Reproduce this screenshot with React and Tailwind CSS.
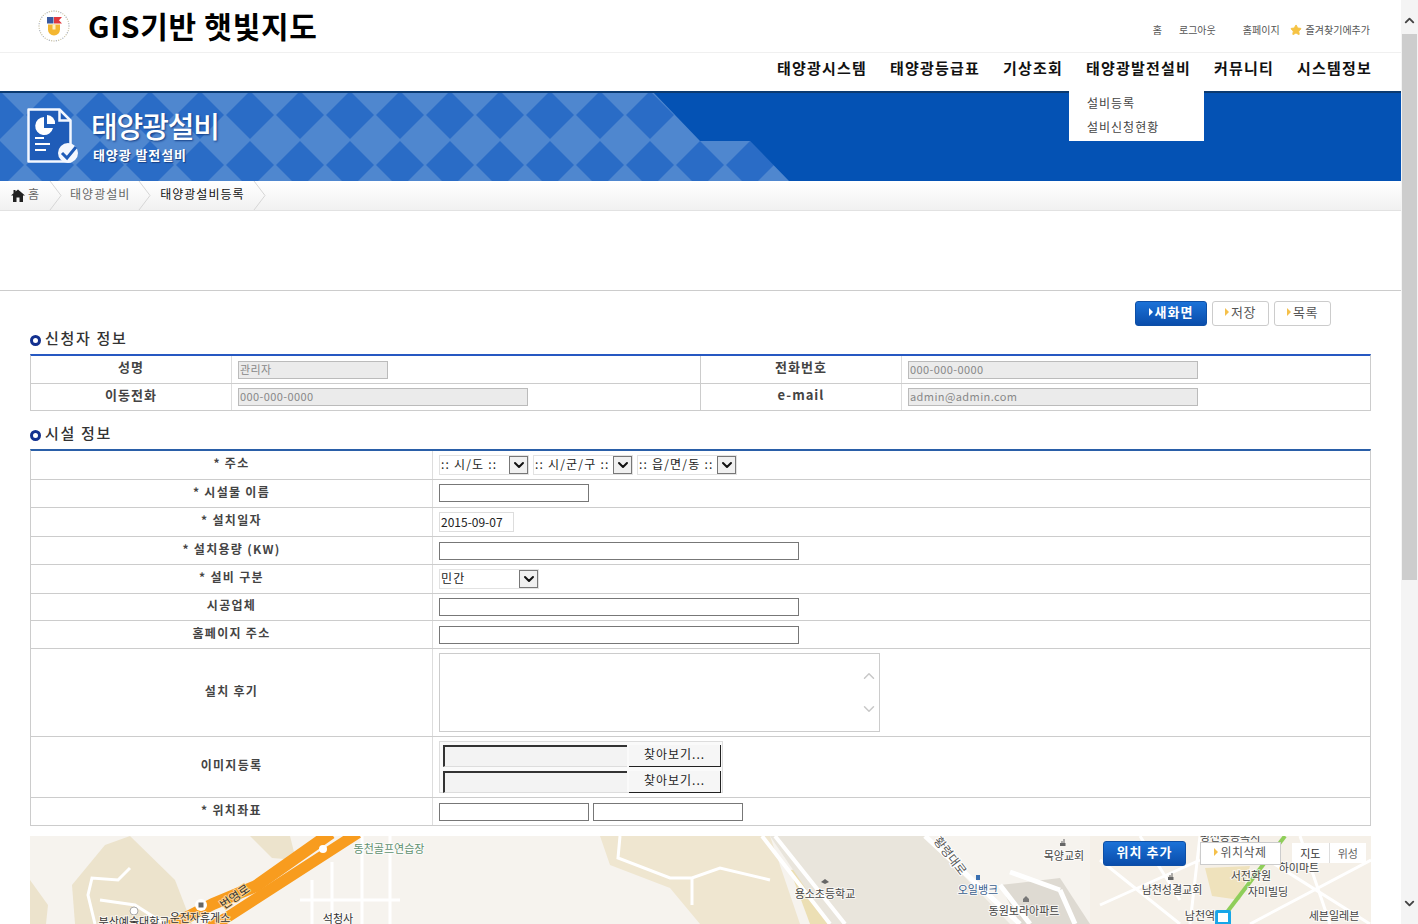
import React from "react";
import { ChevronDown, ChevronUp, Star } from "lucide-react";

function Logo() {
  const dots = [];
  for (let i = 0; i < 40; i++) {
    const a = (i / 40) * Math.PI * 2;
    dots.push(<circle key={i} cx={17 + 15 * Math.cos(a)} cy={17 + 15 * Math.sin(a)} r="0.7" fill={i % 3 ? "#c9c2a6" : "#aab0b8"} />);
  }
  return (
    <svg width="34" height="34" viewBox="0 0 34 34" className="ml-[37px] mt-[9px] shrink-0">
      {dots}
      <rect x="10" y="8" width="6.500" height="6.500" fill="#3a5aa0" />
      <path d="M17 8h8l-3 3.300 3 3.200h-8z" fill="#e0393e" />
      <path d="M11 15.500h12v5a6 6 0 0 1-12 0z" fill="#f4b731" />
      <path d="M15.500 15.500h3v5h-3z" fill="#fff0c0" />
    </svg>
  );
}

function DocIcon() {
  return (
    <svg width="56" height="60" viewBox="0 0 56 60" className="absolute left-[26px] top-[14px]">
      <path d="M2.500 2.500h31l11 11v41h-42z" fill="#1f5cb8" stroke="#f4f8ff" strokeWidth="2.500" strokeLinejoin="round" />
      <path d="M33.500 2.500v11h11" fill="none" stroke="#f4f8ff" strokeWidth="2.500" />
      <path d="M18 10a9 9 0 1 0 9 11h-9z" fill="#fff" />
      <path d="M21 8a8 8 0 0 1 8 9h-8z" fill="#fff" />
      <path d="M9 31h9M9 37h15M9 43h11" stroke="#fff" strokeWidth="2" />
      <circle cx="42" cy="46" r="10" fill="#f4f8ff" />
      <path d="M36 46l5 5 9-11" fill="none" stroke="#1f5cb8" strokeWidth="3" />
    </svg>
  );
}

function Banner() {
  return (
    <div className="relative h-[90px] bg-[#0452b4] border-t-2 border-[#0b3a70]">
      <svg width="800" height="88" viewBox="0 93 800 88" className="absolute left-0 top-0">
        <defs>
          <pattern id="diamonds" x="-25" y="90" width="50" height="50" patternUnits="userSpaceOnUse">
            <rect width="50" height="50" fill="#4f87cf" />
            <path d="M25 1L49 25 25 49 1 25z" fill="#2a6cc6" />
          </pattern>
        </defs>
        <path d="M0 91H652L700 141H750L789 181H0z" fill="url(#diamonds)" />
      </svg>
      <DocIcon />
      <div className="absolute left-[91px] top-[13px] text-[29px] leading-[38px] text-white tracking-[-1.100px] font-medium [text-shadow:1px_1px_2px_#163f85]">태양광설비</div>
      <div className="absolute left-[93px] top-[53px] text-[13px] leading-[18px] font-bold text-white tracking-[0.9px] [text-shadow:1px_1px_1px_#163f85]">태양광 발전설비</div>
      <div className="absolute left-[1069px] top-[-2px] w-[135px] h-[50px] bg-white pl-[18px] text-[12px] leading-[24px] text-[#444] tracking-[1px]">
        <div className="h-[24px]">설비등록</div>
        <div className="h-[24px]">설비신청현황</div>
      </div>
    </div>
  );
}

function Crumb() {
  return (
    <svg width="14" height="29" viewBox="0 0 14 29" className="shrink-0">
      <path d="M1 0l11 14.500L1 29" fill="none" stroke="#d6d6d6" strokeWidth="1" />
    </svg>
  );
}

function HomeGlyph() {
  return (
    <svg width="14" height="13" viewBox="0 0 14 13" className="mr-[3px] shrink-0">
      <path d="M7 0.500L14 6.500H12V13H8.500V8.500H5.500V13H2V6.500H0L2.500 4.300V1H4.500V2.600z" fill="#222" />
    </svg>
  );
}

function Tri({ color }) {
  return <span className={`inline-block w-0 h-0 mr-[2px] border-y-[4px] border-y-transparent border-l-[4px] ${color}`} />;
}

function BlueBtn({ children, className }) {
  return (
    <div className={`flex items-center justify-center pb-[3px] rounded-[3px] border border-[#0d4fa6] bg-linear-to-b from-[#1b72d8] to-[#0a4dab] text-white font-bold text-[13px] tracking-[1px] ${className}`}>
      {children}
    </div>
  );
}

function GhostBtn({ children, className }) {
  return (
    <div className={`flex items-center justify-center pb-[3px] rounded-[3px] border border-[#ccc] bg-white text-[#555] text-[13px] tracking-[0.5px] ${className}`}>
      <Tri color="border-l-[#f5c04a]" />
      {children}
    </div>
  );
}

function Title({ children, className, textClass, dotClass = "mt-[3px]" }) {
  return (
    <div className={`flex items-center text-[15px] font-medium text-[#333] tracking-[1.700px] ${className}`}>
      <span className={`w-[11px] h-[11px] rounded-full border-[3px] border-[#12308f] bg-white mr-[4px] ${dotClass}`} />
      <span className={textClass}>{children}</span>
    </div>
  );
}

function Field({ value = "", className }) {
  return (
    <input
      readOnly
      value={value}
      className={`block h-[18px] px-[1px] pb-[2px] border border-[#777] bg-white text-[12px] leading-none text-[#222] outline-none ${className}`}
    />
  );
}

function Off({ value, className }) {
  return (
    <input
      readOnly
      disabled
      value={value}
      className={`block h-[18px] px-[1px] pb-[2px] border border-[#bbb] bg-[#ebebeb] text-[11px] tracking-[0.4px] leading-none text-[#888] outline-none ${className}`}
    />
  );
}

function Select({ label, className }) {
  return (
    <div className={`flex h-[20px] border border-[#e2e2e2] bg-white ${className}`}>
      <span className="flex-1 whitespace-nowrap overflow-hidden pl-[1px] text-[12px] leading-[16px] text-[#222] tracking-[1.200px]">{label}</span>
      <span className="flex items-center justify-center w-[19px] h-[18px] bg-[#f0f0f0] border border-[#777]">
        <ChevronDown size={16} strokeWidth={3} color="#111" />
      </span>
    </div>
  );
}

function Row({ h, label, children, labelW = "w-[402px]" }) {
  return (
    <div className={`flex border-b border-[#ccc] ${h}`}>
      <div className={`flex items-center justify-center pb-[4px] border-r border-[#ddd] text-[12px] font-bold text-[#444] tracking-[1.300px] ${labelW}`}>{label}</div>
      <div className="flex-1 flex gap-[4px] pl-[6px] pt-[4px]">{children}</div>
    </div>
  );
}

function UserRow({ h, pad, a, b, c, d }) {
  return (
    <div className={`flex border-b border-[#ccc] ${h}`}>
      <div className="w-[201px] flex items-center justify-center pb-[5px] border-r border-[#ddd] text-[13px] font-bold text-[#444] tracking-[1px]">{a}</div>
      <div className={`w-[469px] pl-[6px] border-r border-[#ccc] ${pad}`}>{b}</div>
      <div className="w-[201px] flex items-center justify-center pb-[5px] border-r border-[#ddd] text-[13px] font-bold text-[#444] tracking-[1px]">{c}</div>
      <div className={`flex-1 pl-[6px] ${pad}`}>{d}</div>
    </div>
  );
}

function FileRow() {
  return (
    <div className="flex gap-[2px] h-[22px]">
      <div className="w-[184px] bg-[#f3f3f3] border-l-2 border-t-2 border-[#333] border-b border-b-[#ddd]" />
      <div className="w-[92px] flex items-center justify-center pb-[3px] bg-[#f6f6f6] border-r border-b border-[#222] text-[12px] text-[#222] tracking-[1px]">찾아보기...</div>
    </div>
  );
}

const labels = [
  ["동천골프연습장", 389, 853, "#5f9170"],
  ["운전자휴게소", 200, 922, "#333"],
  ["부산예술대학교", 134, 926, "#333"],
  ["석청사", 338, 923, "#333"],
  ["용소초등학교", 825, 898, "#444"],
  ["오일뱅크", 978, 894, "#3a5f8f"],
  ["동원보라아파트", 1024, 915, "#444"],
  ["목양교회", 1064, 860, "#444"],
  ["남천성결교회", 1172, 894, "#444"],
  ["서전학원", 1251, 880, "#444"],
  ["자미빌딩", 1268, 896, "#444"],
  ["남천역", 1200, 920, "#444"],
  ["세븐일레븐", 1334, 920, "#444"],
  ["하이마트", 1299, 872, "#444"],
  ["평천송공복지", 1230, 841, "#444"],
];

function MapView() {
  return (
    <div className="relative mt-[10px] h-[88px] overflow-hidden bg-[#f6f3ee]">
      <svg width="1341" height="88" viewBox="30 836 1341 88" className="absolute left-0 top-0">
        <path d="M30 880L48 905 46 924H30z" fill="#ece3cc" />
        <path d="M75 924L72 885 105 845 130 836 175 880 192 924z" fill="#ece3cc" />
        <path d="M250 836H290L296 860 272 858z" fill="#ece3cc" />
        <path d="M600 836H770L800 924H700L670 888 610 865z" fill="#efe6d0" />
        <path d="M790 870L835 866 870 924H810z" fill="#ecdfb4" />
        <path d="M770 836H925L1010 924H830z" fill="#e9e5dc" />
        <path d="M1000 885L1060 878 1090 924H1020z" fill="#dedad2" />
        <path d="M1090 836H1371V924H1090z" fill="#f5f0e8" />
        <path d="M1205 868L1250 866 1240 900 1212 896z" fill="#efe2bc" />
        <g fill="none" stroke="#fff" strokeWidth="3">
          <path d="M95 924L88 895 92 878 118 880 130 868" />
          <path d="M100 900L135 905 165 924" />
          <path d="M362 836V924M332 862V924M390 836V924M300 900H400M312 880V924" />
          <path d="M620 836L618 858 670 878 692 878 720 868 770 880" />
          <path d="M692 878V905" />
          <path d="M762 836L830 924M775 836L845 924" strokeWidth="4" />
          <path d="M925 836L1020 924" strokeWidth="5" />
          <path d="M1010 872L1060 890M1000 885L1030 924M1060 890L1075 924" strokeWidth="5" />
          <path d="M1100 860L1180 924M1100 905L1200 860M1140 836L1180 900M1230 836L1370 924M1250 924L1371 860M1300 836L1330 924M1200 836L1190 924" />
        </g>
        <path d="M331 833L256 886 213 904 170 926" fill="none" stroke="#f89c1e" strokeWidth="12" />
        <path d="M358 833L226 918 205 930" fill="none" stroke="#f89c1e" strokeWidth="11" />
        <circle cx="323" cy="849" r="4" fill="#fff" />
        <circle cx="201" cy="905" r="6" fill="#fff" />
        <rect x="198.500" y="902.500" width="5" height="5" fill="#666" />
        <path d="M1285 836L1218 924" stroke="#8fce5a" strokeWidth="4" />
        <rect x="1215" y="910" width="16" height="20" rx="2" fill="#17a6e8" />
        <rect x="1218" y="913" width="10" height="9" fill="#fff" />
        <path d="M1060 846v-3h1.500v-2h1v2h1v-4h1v4h1v3z" fill="#666" />
        <path d="M1168 880v-3h1.500v-2h1v2h1v-4h1v4h1v3z" fill="#666" />
        <path d="M821 882l4-3 4 3-4 2z" fill="#666" />
        <path d="M1023 899l3-3 3 3v3h-6z" fill="#777" />
        <rect x="976" y="875" width="4" height="5" fill="#3a6fb0" />
        <circle cx="134" cy="911" r="4" fill="#fff" stroke="#aaa" />
        {labels.map(([t, x, y, c]) => (
          <text key={t} x={x} y={y} textAnchor="middle" fontSize="11" fill={c} stroke="#fff" strokeWidth="2" strokeOpacity="0.7" paintOrder="stroke">{t}</text>
        ))}
        <text x="235" y="901" textAnchor="middle" fontSize="12" fill="#333" stroke="#fbd08a" strokeWidth="2" paintOrder="stroke" transform="rotate(-35 235 897)">번영로</text>
        <text x="950" y="860" textAnchor="middle" fontSize="12" fill="#555" stroke="#fff" strokeWidth="2" paintOrder="stroke" transform="rotate(52 950 856)">황령대로</text>
      </svg>
      <BlueBtn className="absolute left-[1073px] top-[5px] w-[83px] h-[25px]">위치 추가</BlueBtn>
      <GhostBtn className="absolute left-[1170px] top-[6px] w-[81px] h-[23px] !rounded-none !text-[12px]">위치삭제</GhostBtn>
      <div className="absolute left-[1262px] top-[7px] flex w-[74px] h-[20px] bg-white text-[11px] text-[#333]">
        <div className="flex-1 flex items-center justify-center border-r border-[#ddd]">지도</div>
        <div className="flex-1 flex items-center justify-center text-[#666]">위성</div>
      </div>
    </div>
  );
}

export default function App() {
  return (
    <div className="flex h-[924px] overflow-hidden bg-white font-['Noto_Sans_CJK_KR','Liberation_Sans',sans-serif]">
      <div className="w-[1401px] shrink-0">
        <div className="flex h-[53px] border-b border-[#f0f0f0]">
          <Logo />
          <div className="ml-[17px] mt-[4px] text-[30px] leading-[43px] font-bold text-black tracking-[0.7px] whitespace-nowrap">GIS기반 햇빛지도</div>
          <div className="ml-auto mr-[31px] mt-[22px] flex items-center h-[15px] text-[10px] text-[#555] whitespace-nowrap">
            <span className="mr-[17px]">홈</span>
            <span className="mr-[27px]">로그아웃</span>
            <span className="mr-[10px]">홈페이지</span>
            <Star size={12} fill="#f6c343" color="#f6c343" className="mr-[4px]" />
            <span>즐겨찾기에추가</span>
          </div>
        </div>
        <div className="flex h-[38px] items-center justify-end gap-[23px] pr-[29px] pb-[7px] text-[15px] font-bold text-[#111] tracking-[1.200px] whitespace-nowrap">
          <span>태양광시스템</span>
          <span>태양광등급표</span>
          <span>기상조회</span>
          <span>태양광발전설비</span>
          <span>커뮤니티</span>
          <span>시스템정보</span>
        </div>
        <Banner />
        <div className="flex items-center h-[30px] pl-[11px] border-b border-[#e2e2e2] bg-linear-to-b from-white to-[#f1f1f1] text-[12px] tracking-[1px] whitespace-nowrap">
          <HomeGlyph />
          <span className="text-[#666] mr-[9px] pb-[3px]">홈</span>
          <Crumb />
          <span className="text-[#666] ml-[7px] mr-[8px] pb-[3px]">태양광설비</span>
          <Crumb />
          <span className="text-[#111] ml-[8px] mr-[8px] pb-[3px]">태양광설비등록</span>
          <Crumb />
        </div>
        <div className="h-[80px] border-b border-[#ccc]" />
        <div className="px-[30px]">
          <div className="flex justify-end gap-[5px] pr-[40px] mt-[10px] h-[25px]">
            <BlueBtn className="w-[72px]"><Tri color="border-l-white" />새화면</BlueBtn>
            <GhostBtn className="w-[57px]">저장</GhostBtn>
            <GhostBtn className="w-[57px]">목록</GhostBtn>
          </div>
          <Title className="h-[28px]" textClass="pb-[4px]" dotClass="mt-[1px]">신청자 정보</Title>
          <div className="border-t-2 border-t-[#2658c2] border-x border-x-[#ccc]">
            <UserRow h="h-[28px]" pad="pt-[5px]" a="성명" b={<Off value="관리자" className="w-[150px]" />} c="전화번호" d={<Off value="000-000-0000" className="w-[290px]" />} />
            <UserRow h="h-[27px]" pad="pt-[4px]" a="이동전화" b={<Off value="000-000-0000" className="w-[290px]" />} c="e-mail" d={<Off value="admin@admin.com" className="w-[290px]" />} />
          </div>
          <Title className="h-[38px] pt-[7px]">시설 정보</Title>
          <div className="border-t-2 border-t-[#2a5fa8] border-x border-x-[#ccc]">
            <Row h="h-[29px]" label="* 주소">
              <Select label=":: 시/도 ::" className="w-[90px]" />
              <Select label=":: 시/군/구 ::" className="w-[100px]" />
              <Select label=":: 읍/면/동 ::" className="w-[100px]" />
            </Row>
            <Row h="h-[28px]" label="* 시설물 이름"><Field className="w-[150px]" /></Row>
            <Row h="h-[29px]" label="* 설치일자"><Field value="2015-09-07" className="w-[75px] !h-[20px] !border-[#ddd]" /></Row>
            <Row h="h-[28px]" label="* 설치용량 (KW)"><Field className="w-[360px] mt-[1px]" /></Row>
            <Row h="h-[29px]" label="* 설비 구분"><Select label="민간" className="w-[100px]" /></Row>
            <Row h="h-[27px]" label="시공업체"><Field className="w-[360px]" /></Row>
            <Row h="h-[28px]" label="홈페이지 주소"><Field className="w-[360px] mt-[1px]" /></Row>
            <Row h="h-[88px]" label="설치 후기">
              <div className="relative w-[441px] h-[79px] border border-[#ccc]">
                <ChevronUp size={18} color="#c8c8c8" strokeWidth={2} className="absolute right-[1px] top-[13px]" />
                <ChevronDown size={18} color="#c8c8c8" strokeWidth={2} className="absolute right-[1px] top-[46px]" />
              </div>
            </Row>
            <Row h="h-[61px]" label="이미지등록">
              <div className="flex flex-col gap-[4px] w-[284px] h-[52px] border border-[#ddd] bg-[#fafafa] pl-[3px] pt-[3px]">
                <FileRow />
                <FileRow />
              </div>
            </Row>
            <Row h="h-[28px]" label="* 위치좌표">
              <Field className="w-[150px] mt-[1px]" />
              <Field className="w-[150px] mt-[1px]" />
            </Row>
          </div>
          <MapView />
        </div>
      </div>
      <div className="relative w-[17px] shrink-0 bg-[#f4f4f4]">
        <ChevronUp size={15} strokeWidth={3} color="#444" className="absolute left-[1px] top-[13px]" />
        <div className="absolute left-[1px] top-[34px] w-[15px] h-[546px] bg-[#cdcdcd]" />
        <ChevronDown size={15} strokeWidth={3} color="#444" className="absolute left-[1px] top-[896px]" />
      </div>
    </div>
  );
}
